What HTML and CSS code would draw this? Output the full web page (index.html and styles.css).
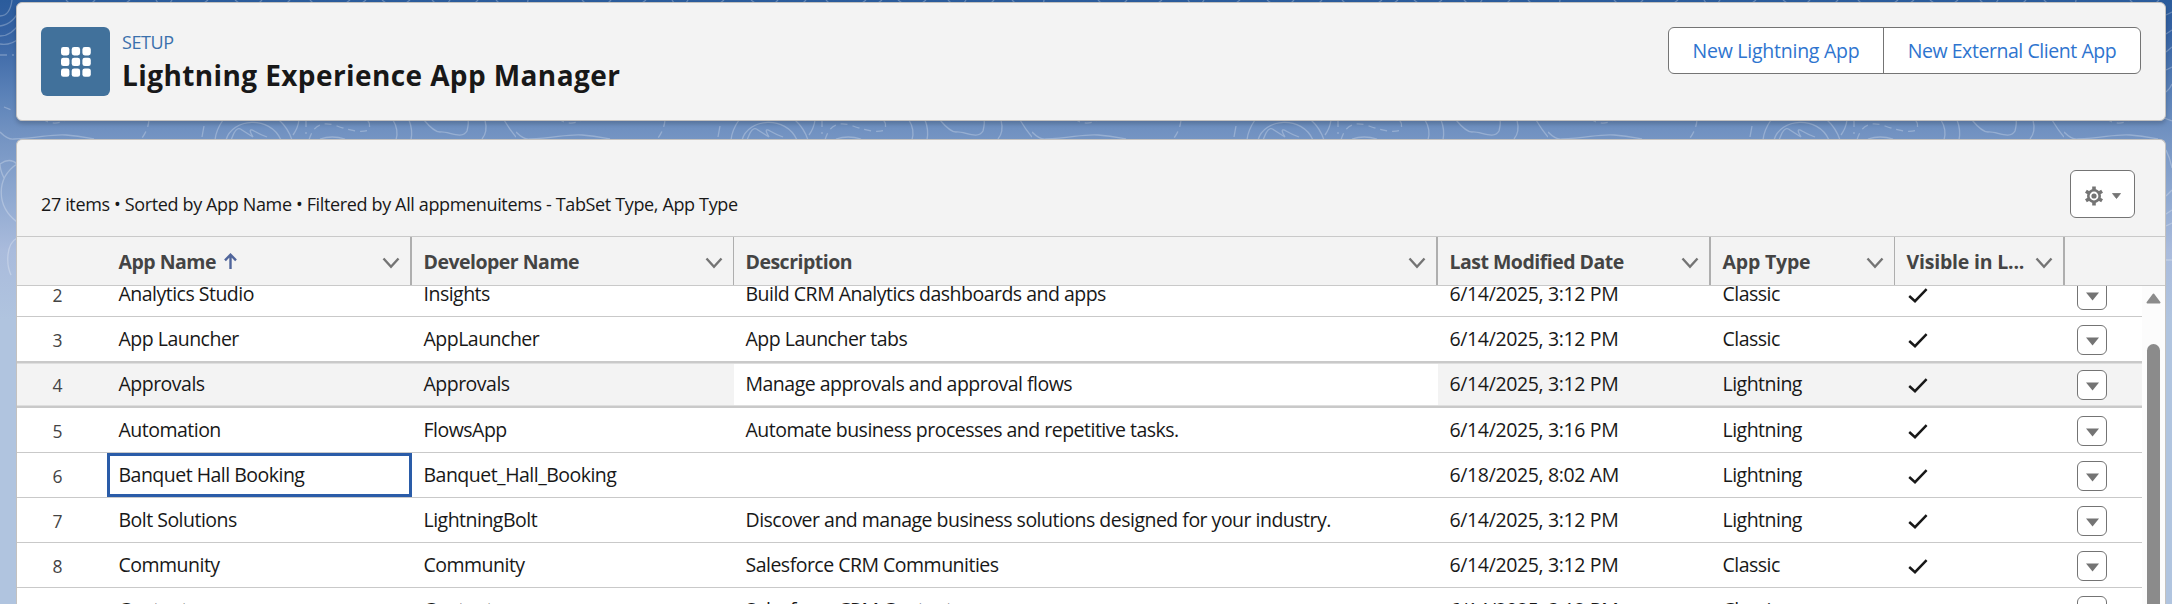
FILE: index.html
```
<!DOCTYPE html>
<html lang="en">
<head>
<meta charset="utf-8">
<title>Lightning Experience App Manager</title>
<link rel="stylesheet" href="styles.css">
</head>
<body>
<svg class="backdrop" width="2172" height="604" aria-hidden="true">
  <defs>
    <pattern id="topo" width="516" height="604" patternUnits="userSpaceOnUse">
      <g fill="none" stroke="#fff" stroke-opacity=".26" stroke-width="1.3">
        <path d="M0 16Q10 16 12 0M0 26Q14 24 20 8M0 36Q12 36 20 22M0 44Q10 46 20 38M66 0l3 3M95 0l-3 3M130 0l-4 3M156 0l2 3M172 0l-2 3M208 0l-4 3M235 0l4 3M262 0l-3 3M290 0l-3 3M310 0l3 3M350 0l-4 3M366 0l-4 3M382 0l4 3M410 0l-4 3M432 0l3 3M450 0l-2 3M478 0l-3 3M496 0l3 3"/>
        <path d="M0 55h14M4 107l10 4M149 120q-1 10-7 18M42 118q10 9 24 2" stroke-dasharray="7 5"/>
        <path d="M0 132Q8 140 14 139C40 138 50 134 66 135S88 138 94 139M204 126l-2 11"/>
        <path d="M0 164Q10 157 17 164Q10 168 4 178Q0 170 0 164M17 164C-4 178-4 206 17 222M17 238C6 244 6 264 11 275"/>
        <path d="M223 120Q216 130 215 140M226 140C232 118 270 115 281 140M279 120Q288 128 292 140M299 120Q298 128 293 135"/>
        <path d="M231 140l3-7q4-7 8-3l11 7q-6-10 1-6t13 6"/>
        <path d="M309 140q6-22 28-14t32 4q2-8-3-11M306 120v14" stroke-dasharray="7 5"/>
        <path d="M320 139q12-4 25 0M393 120q6 10 3 20M409 120q4 10 2 20M424 120q10 12 16 12c8-1 22 8 27-1q2-8 1-11M485 120q3 12-3 19"/>
        <path d="M504 120q6 10 12 17"/>
      </g>
    </pattern>
  </defs>
  <rect width="2160" height="604" fill="url(#topo)"/>
  <g fill="none" stroke="#fff" stroke-opacity=".26" stroke-width="1.3">
    <path d="M2166 15l6-3M2166 34l6-4M2166 52l6-5M2166 70l6-3M2166 92q4-3 6-8M2164 118l8 3M2166 150q4 8 6 18M2166 196l6-6M2166 214l6-4M2166 226l6-3M2166 260h6"/>
  </g>
</svg>

<main class="page">
  <header class="card page-header">
    <div class="app-icon">
      <svg width="30" height="30" viewBox="0 0 30 30" fill="#fff">
        <rect x="0" y="0" width="8.4" height="8.4" rx="2.4"/><rect x="10.7" y="0" width="8.4" height="8.4" rx="2.4"/><rect x="21.4" y="0" width="8.4" height="8.4" rx="2.4"/>
        <rect x="0" y="10.7" width="8.4" height="8.4" rx="2.4"/><rect x="10.7" y="10.7" width="8.4" height="8.4" rx="2.4"/><rect x="21.4" y="10.7" width="8.4" height="8.4" rx="2.4"/>
        <rect x="0" y="21.4" width="8.4" height="8.4" rx="2.4"/><rect x="10.7" y="21.4" width="8.4" height="8.4" rx="2.4"/><rect x="21.4" y="21.4" width="8.4" height="8.4" rx="2.4"/>
      </svg>
    </div>
    <div class="heading">
      <p class="eyebrow">SETUP</p>
      <h1 class="title">Lightning Experience App Manager</h1>
    </div>
    <div class="button-group">
      <button class="button">New Lightning App</button>
      <button class="button">New External Client App</button>
    </div>
  </header>

  <section class="card list">
    <div class="list-bar">
      <p class="summary">27 items • Sorted by App Name • Filtered by All appmenuitems - TabSet Type, App Type</p>
      <button class="gear-button" aria-label="List settings">
        <svg width="18" height="20" viewBox="0 0 18 20"><g stroke="#747474" fill="none"><circle cx="9" cy="10" r="5.7" stroke-width="2.6"/><circle cx="9" cy="10" r="2.6" fill="#747474" stroke="none"/><path stroke-width="3.6" d="M9 .6v4M9 15.4v4M.9 5.3l3.4 2M13.7 12.7l3.4 2M.9 14.7l3.4-2M13.7 7.3l3.4-2"/></g></svg>
        <svg width="9" height="6" viewBox="0 0 9 6"><path d="M.5.5h8L4.500 5.500z" fill="#747474" stroke="#747474" stroke-linejoin="round" stroke-width=".8"/></svg>
      </button>
    </div>

    <div class="row head">
      <div class="cell"></div>
      <div class="cell wide-rule">App Name<svg class="sort" width="13" height="16" viewBox="0 0 13 16"><path d="M6.500 16V2M1 7.300L6.500 1.700L12 7.300" fill="none" stroke="#50659b" stroke-width="2.4"/></svg><svg class="chev" viewBox="0 0 18 12"><path d="M1.500 1.500L9 9.700L16.500 1.500"/></svg></div>
      <div class="cell rule">Developer Name<svg class="chev" viewBox="0 0 18 12"><path d="M1.500 1.500L9 9.700L16.500 1.500"/></svg></div>
      <div class="cell wide-rule">Description<svg class="chev" viewBox="0 0 18 12"><path d="M1.500 1.500L9 9.700L16.500 1.500"/></svg></div>
      <div class="cell wide-rule">Last Modified Date<svg class="chev" viewBox="0 0 18 12"><path d="M1.500 1.500L9 9.700L16.500 1.500"/></svg></div>
      <div class="cell rule loose">App Type<svg class="chev" viewBox="0 0 18 12"><path d="M1.500 1.500L9 9.700L16.500 1.500"/></svg></div>
      <div class="cell wide-rule loose">Visible in L...<svg class="chev" viewBox="0 0 18 12"><path d="M1.500 1.500L9 9.700L16.500 1.500"/></svg></div>
      <div class="cell"></div>
    </div>

    <div class="viewport">
      <div class="rows">
        <div class="row"><div class="num">2</div><div class="cell">Analytics Studio</div><div class="cell">Insights</div><div class="cell">Build CRM Analytics dashboards and apps</div><div class="cell date">6/14/2025, 3:12 PM</div><div class="cell">Classic</div><div class="cell"><svg class="check" viewBox="0 0 20 15"><path d="M1.200 8L7 13.200L18.600 1.200"/></svg></div><div class="action"><button class="menu"><svg viewBox="0 0 13 9"><path d="M0 .5h13L6.500 8.500z"/></svg></button></div></div>
        <div class="row"><div class="num">3</div><div class="cell">App Launcher</div><div class="cell">AppLauncher</div><div class="cell">App Launcher tabs</div><div class="cell date">6/14/2025, 3:12 PM</div><div class="cell">Classic</div><div class="cell"><svg class="check" viewBox="0 0 20 15"><path d="M1.200 8L7 13.200L18.600 1.200"/></svg></div><div class="action"><button class="menu"><svg viewBox="0 0 13 9"><path d="M0 .5h13L6.500 8.500z"/></svg></button></div></div>
        <div class="row hovered"><div class="num">4</div><div class="cell">Approvals</div><div class="cell">Approvals</div><div class="cell plain">Manage approvals and approval flows</div><div class="cell date">6/14/2025, 3:12 PM</div><div class="cell">Lightning</div><div class="cell"><svg class="check" viewBox="0 0 20 15"><path d="M1.200 8L7 13.200L18.600 1.200"/></svg></div><div class="action"><button class="menu"><svg viewBox="0 0 13 9"><path d="M0 .5h13L6.500 8.500z"/></svg></button></div></div>
        <div class="row"><div class="num">5</div><div class="cell">Automation</div><div class="cell">FlowsApp</div><div class="cell">Automate business processes and repetitive tasks.</div><div class="cell date">6/14/2025, 3:16 PM</div><div class="cell">Lightning</div><div class="cell"><svg class="check" viewBox="0 0 20 15"><path d="M1.200 8L7 13.200L18.600 1.200"/></svg></div><div class="action"><button class="menu"><svg viewBox="0 0 13 9"><path d="M0 .5h13L6.500 8.500z"/></svg></button></div></div>
        <div class="row"><div class="num">6</div><div class="cell focused">Banquet Hall Booking</div><div class="cell">Banquet_Hall_Booking</div><div class="cell"></div><div class="cell date">6/18/2025, 8:02 AM</div><div class="cell">Lightning</div><div class="cell"><svg class="check" viewBox="0 0 20 15"><path d="M1.200 8L7 13.200L18.600 1.200"/></svg></div><div class="action"><button class="menu"><svg viewBox="0 0 13 9"><path d="M0 .5h13L6.500 8.500z"/></svg></button></div></div>
        <div class="row"><div class="num">7</div><div class="cell">Bolt Solutions</div><div class="cell">LightningBolt</div><div class="cell">Discover and manage business solutions designed for your industry.</div><div class="cell date">6/14/2025, 3:12 PM</div><div class="cell">Lightning</div><div class="cell"><svg class="check" viewBox="0 0 20 15"><path d="M1.200 8L7 13.200L18.600 1.200"/></svg></div><div class="action"><button class="menu"><svg viewBox="0 0 13 9"><path d="M0 .5h13L6.500 8.500z"/></svg></button></div></div>
        <div class="row"><div class="num">8</div><div class="cell">Community</div><div class="cell">Community</div><div class="cell">Salesforce CRM Communities</div><div class="cell date">6/14/2025, 3:12 PM</div><div class="cell">Classic</div><div class="cell"><svg class="check" viewBox="0 0 20 15"><path d="M1.200 8L7 13.200L18.600 1.200"/></svg></div><div class="action"><button class="menu"><svg viewBox="0 0 13 9"><path d="M0 .5h13L6.500 8.500z"/></svg></button></div></div>
        <div class="row last"><div class="num">9</div><div class="cell">Content</div><div class="cell">Content</div><div class="cell">Salesforce CRM Content</div><div class="cell date">6/14/2025, 3:12 PM</div><div class="cell">Classic</div><div class="cell"><svg class="check" viewBox="0 0 20 15"><path d="M1.200 8L7 13.200L18.600 1.200"/></svg></div><div class="action"><button class="menu"><svg viewBox="0 0 13 9"><path d="M0 .5h13L6.500 8.500z"/></svg></button></div></div>
      </div>
      <div class="scrollbar">
        <svg width="15" height="11" viewBox="0 0 15 11"><path d="M7.500 1.500L13.500 9.500H1.500z" fill="#8b8b8b" stroke="#8b8b8b" stroke-width="2" stroke-linejoin="round"/></svg>
        <div class="thumb"></div>
      </div>
    </div>
  </section>
</main>
</body>
</html>
```
FILE: styles.css
```
* { box-sizing: border-box; margin: 0; padding: 0; }

body {
  width: 2172px;
  height: 604px;
  overflow: hidden;
  background: linear-gradient(#2b5c9c 0, #3461a2 30px, #5b82b8 95px, #7393c2 135px, #8ea8d0 195px, #a9bbdc 250px, #b0c4df 320px);
  color: #181818;
  font-family: "Open Sans", "Noto Sans", sans-serif;
  font-size: 19.5px;
  letter-spacing: -.51px;
}

button { font: inherit; letter-spacing: inherit; }

.backdrop { position: absolute; top: 0; left: 0; z-index: -1; }

.page {
  display: flex;
  flex-direction: column;
  gap: 18px;
  height: 604px;
  padding: 2px 6px 0 16px;
}

.card {
  border: 1px solid #c3c1bf;
  border-radius: 6px;
  background: #f3f3f3;
}

.page-header {
  display: flex;
  flex: none;
  align-items: flex-start;
  height: 119px;
  padding: 24px 24px 0;
  box-shadow: 0 3px 4px rgba(0, 0, 0, .18);
}

.app-icon {
  display: grid;
  place-items: center;
  width: 69px;
  height: 69px;
  border-radius: 6px;
  background: #41719b;
}

.heading { flex: 1; padding-left: 12px; }
.eyebrow { color: #3a70ac; font-size: 18px; letter-spacing: -.4px; line-height: 31px; }
.title { font-size: 28px; font-weight: 700; letter-spacing: .4px; line-height: 35px; }

.button-group {
  display: flex;
  border: 1px solid #747474;
  border-radius: 6px;
  background: #fff;
  overflow: hidden;
}

.button {
  width: 214px;
  height: 45px;
  border: 0;
  background: none;
  color: #2e74cf;
  letter-spacing: -.24px;
  white-space: nowrap;
}

.button + .button { width: 257px; border-left: 1px solid #747474; letter-spacing: -.44px; }

.list {
  display: flex;
  flex: 1;
  flex-direction: column;
  min-height: 0;
  border-bottom: 0;
  border-radius: 6px 6px 0 0;
  overflow: hidden;
}

.list-bar {
  display: flex;
  flex: none;
  align-items: flex-start;
  justify-content: space-between;
  height: 96px;
  padding: 30px 30px 0 24px;
}

.summary { padding-top: 20px; font-size: 18px; letter-spacing: -.36px; line-height: 28px; }

.gear-button {
  display: flex;
  align-items: center;
  justify-content: center;
  gap: 9px;
  width: 65px;
  height: 48px;
  padding-top: 4px;
  border: 1px solid #747474;
  border-radius: 6px;
  background: #fff;
}

.row {
  display: grid;
  grid-template-columns: 90px 305px 322px 704px 273px 184px 170px 1fr;
  grid-template-rows: 100%;
  height: 45px;
  border-bottom: 1px solid #c9c9c9;
  background: #fff;
}

.cell {
  display: flex;
  align-items: center;
  padding-left: 11.5px;
  line-height: 44px;
  white-space: nowrap;
}

.date { letter-spacing: -.36px; }

.head {
  flex: none;
  height: 50px;
  border-top: 1px solid #c9c9c9;
  background: #f3f3f3;
  color: #444;
  font-weight: 700;
}

.head .cell { padding-top: 2px; }
.head .loose { letter-spacing: -.2px; }
.wide-rule { border-right: 2px solid #aeaeae; }
.rule { border-right: 1px solid #aeaeae; }
.sort { margin: -2px 0 0 8px; }

.chev {
  width: 18px;
  height: 12px;
  margin: 2px 10px 0 auto;
  fill: none;
  stroke: #747474;
  stroke-width: 2.4;
}

.viewport { display: flex; flex: 1; min-height: 0; overflow: hidden; }
.rows { flex: 1; margin-top: -14px; }

.num {
  padding-right: 45px;
  color: #444;
  font-size: 17.5px;
  line-height: 47px;
  text-align: right;
}

.hovered {
  height: 46px;
  border-bottom: 2px solid #c9c9c9;
  background: #f3f3f3;
  box-shadow: inset 0 1px #c9c9c9, inset 0 2px #dedede, inset 0 -1px #dedede;
}

.plain { margin: 2px 0 1px; padding-bottom: 1px; background: #fff; line-height: 40px; }
.focused { padding-left: 8.5px; border: 3px solid #2a5ca8; line-height: 38px; }

.check {
  width: 20px;
  height: 15px;
  margin: 2px 0 0 1px;
  fill: none;
  stroke: #181818;
  stroke-width: 2.5;
}

.action { padding: 8px 0 0 12px; }

.menu {
  display: grid;
  place-items: center;
  width: 30px;
  height: 30px;
  padding-top: 3px;
  border: 1px solid #747474;
  border-radius: 6px;
  background: #fff;
}

.menu svg { width: 13px; height: 9px; fill: #747474; }

.scrollbar {
  display: flex;
  flex-direction: column;
  align-items: center;
  width: 23px;
  padding-top: 7px;
  background: #fcfcfc;
}

.thumb {
  flex: 1;
  width: 13px;
  margin-top: 40px;
  border-radius: 7px 7px 0 0;
  background: #8b8b8b;
}
```
